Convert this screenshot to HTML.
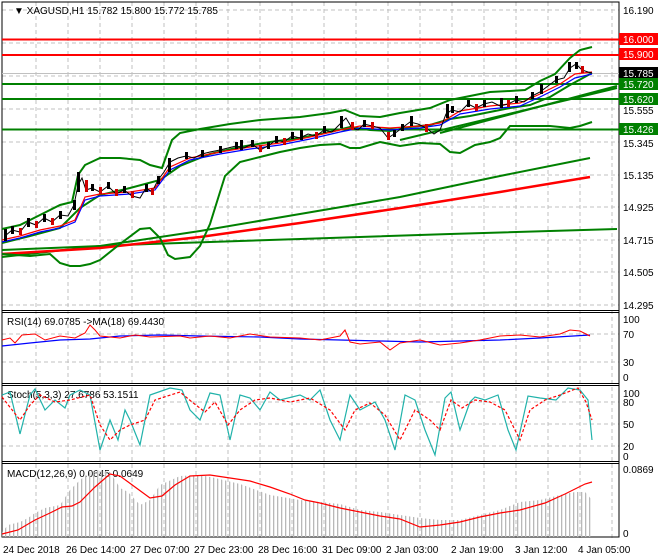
<!DOCTYPE html>
<html><head><meta charset="utf-8"><style>
html,body{margin:0;padding:0;background:#fff;width:660px;height:560px;overflow:hidden}
svg{display:block;font-family:"Liberation Sans",sans-serif}
text{font-size:10px;fill:#000}
</style></head><body>
<svg width="660" height="560" viewBox="0 0 660 560" xmlns="http://www.w3.org/2000/svg">
<defs>
<pattern id="bars" width="4" height="10" patternUnits="userSpaceOnUse"><rect x="1" y="0" width="1.3" height="10" fill="#b8b8b8"/></pattern>
</defs>
<g stroke="#c0c0c0" stroke-dasharray="4,3" stroke-width="1" fill="none">
<path d="M36 2V539M68 2V539M100 2V539M132 2V539M164 2V539M196 2V539M228 2V539M260 2V539M292 2V539M324 2V539M356 2V539M388 2V539M420 2V539M452 2V539M484 2V539M516 2V539M548 2V539M580 2V539M612 2V539"/>
<path d="M2 10H619M2 43H619M2 76H619M2 109H619M2 142H619M2 175H619M2 207H619M2 240H619M2 272H619M2 305H619"/>
<path d="M2 334H619M2 362H619M2 402H619M2 424H619M2 446H619"/>
</g>
<rect x="2" y="2" width="617" height="535" fill="none" stroke="#000"/>
<path d="M2 310.5H619M2 312.5H619M2 383.5H619M2 385.5H619M2 461.5H619M2 463.5H619" stroke="#000"/>
<path d="M2 39.5H619M2 55H619" stroke="#f00" stroke-width="2"/>
<path d="M2 73.5H619" stroke="#c0c0c0"/>
<path d="M2 84H619M2 99H619M2 129.5H619" stroke="#008000" stroke-width="2"/>
<polyline fill="none" stroke="#008000" stroke-width="2" points="2,250 150,244 300,239 450,234 617,229"/>
<polyline fill="none" stroke="#008000" stroke-width="2" points="2,257 100,246 200,231 300,214 400,197 500,176 590,158"/>
<polyline fill="none" stroke="#f00" stroke-width="2.5" points="2,254 100,248 200,237 300,223 400,208 500,192 590,177"/>
<polyline fill="none" stroke="#008000" stroke-width="2" points="440,133 617,86"/>
<polyline fill="none" stroke="#008000" stroke-width="2" points="400,140 617,88"/>
<polyline fill="none" stroke="#008000" stroke-width="2" points="2,229 20,225 40,215 60,205 72,202 78,175 85,165 100,158 120,158 140,160 150,165 162,168 172,140 180,133 200,129 230,124 260,120 300,117 330,113 345,110 360,116 380,117 400,113 430,108 450,100 470,96 490,92 510,91 525,90 540,81 555,74 570,58 580,50 592,47"/>
<polyline fill="none" stroke="#008000" stroke-width="2" points="2,254 30,256 50,254 60,263 70,266 80,266 90,264 100,260 120,244 140,229 150,228 160,238 168,255 175,259 190,257 200,246 210,224 225,176 240,162 260,157 280,152 300,148 320,145 340,144 350,148 360,148 380,142 400,146 420,143 440,144 450,152 460,153 475,145 490,142 500,138 510,126 530,126 550,126 570,128 580,126 592,122"/>
<polyline fill="none" stroke="#008000" stroke-width="2" points="2,243 30,236 60,228 80,208 100,195 130,188 160,180 180,166 210,154 240,147 270,142 300,138 330,132 350,127 370,130 390,131 410,127 430,125 450,119 470,116 490,112 510,108 530,105 550,97 570,85 592,73"/>
<polyline fill="none" stroke="#00f" stroke-width="1.2" points="2,242 20,238 40,232 60,228 75,222 85,200 100,196 130,194 155,190 170,170 190,160 220,154 250,149 280,145 310,139 340,132 360,128 390,130 420,128 440,125 460,114 490,109 520,106 540,97 560,87 575,78 592,74"/>
<polyline fill="none" stroke="#f00" stroke-width="1.2" points="2,240 20,236 40,230 60,226 75,220 85,197 100,194 130,192 155,188 170,167 190,158 220,152 250,147 280,143 310,137 340,130 360,126 390,128 420,126 440,123 460,111 490,106 520,103 540,94 560,84 575,74 592,72"/>
<polyline fill="none" stroke="#000" stroke-width="1" points="5,236 12,230 20,232 28,222 36,225 44,218 52,222 60,215 68,216 74,205 78,185 82,178 86,190 92,188 100,192 108,186 116,194 124,190 132,196 140,198 146,188 152,192 158,180 164,172 170,162 178,158 186,156 194,158 202,154 210,152 220,150 228,148 236,146 244,148 252,144 260,150 268,146 276,140 284,142 292,136 300,138 308,134 316,136 324,130 332,132 340,124 346,118 352,128 358,130 364,124 372,126 380,128 388,138 394,134 402,128 410,122 418,124 426,128 434,134 440,130 446,114 452,110 460,112 468,104 476,108 484,104 492,102 500,106 508,104 516,100 524,102 532,96 540,92 548,86 556,80 564,78 570,68 576,64 582,70 588,72 592,73"/>
<g fill="#000">
<rect x="4" y="229" width="3" height="12"/><rect x="11" y="226" width="3" height="8"/><rect x="27" y="218" width="3" height="9"/><rect x="43" y="214" width="3" height="8"/><rect x="59" y="211" width="3" height="8"/><rect x="73" y="200" width="3" height="10"/><rect x="77" y="172" width="3" height="20"/><rect x="91" y="184" width="3" height="7"/><rect x="107" y="182" width="3" height="7"/><rect x="123" y="186" width="3" height="7"/><rect x="145" y="184" width="3" height="8"/><rect x="157" y="176" width="3" height="8"/><rect x="168" y="158" width="3" height="14"/><rect x="185" y="152" width="3" height="7"/><rect x="201" y="150" width="3" height="7"/><rect x="219" y="146" width="3" height="7"/><rect x="235" y="142" width="3" height="7"/><rect x="240" y="140" width="3" height="10"/><rect x="251" y="140" width="3" height="7"/><rect x="267" y="142" width="3" height="7"/><rect x="275" y="136" width="3" height="7"/><rect x="291" y="132" width="3" height="7"/><rect x="300" y="130" width="3" height="10"/><rect x="323" y="126" width="3" height="7"/><rect x="340" y="116" width="3" height="12"/><rect x="363" y="120" width="3" height="7"/><rect x="393" y="130" width="3" height="7"/><rect x="401" y="124" width="3" height="7"/><rect x="410" y="116" width="3" height="10"/><rect x="446" y="104" width="3" height="14"/><rect x="451" y="106" width="3" height="7"/><rect x="467" y="100" width="3" height="7"/><rect x="483" y="100" width="3" height="7"/><rect x="500" y="98" width="3" height="10"/><rect x="515" y="96" width="3" height="7"/><rect x="531" y="92" width="3" height="7"/><rect x="540" y="84" width="3" height="10"/><rect x="555" y="76" width="3" height="7"/><rect x="568" y="62" width="3" height="10"/><rect x="575" y="62" width="3" height="7"/>
</g>
<g fill="#d00000">
<rect x="19" y="228" width="3" height="7"/><rect x="35" y="221" width="3" height="7"/><rect x="51" y="218" width="3" height="7"/><rect x="85" y="180" width="3" height="12"/><rect x="99" y="187" width="3" height="7"/><rect x="115" y="189" width="3" height="7"/><rect x="131" y="191" width="3" height="7"/><rect x="151" y="188" width="3" height="7"/><rect x="259" y="145" width="3" height="7"/><rect x="283" y="138" width="3" height="7"/><rect x="315" y="132" width="3" height="7"/><rect x="351" y="122" width="3" height="8"/><rect x="371" y="122" width="3" height="7"/><rect x="387" y="132" width="3" height="8"/><rect x="425" y="124" width="3" height="8"/><rect x="475" y="104" width="3" height="7"/><rect x="507" y="100" width="3" height="7"/><rect x="581" y="66" width="3" height="7"/>
</g>
<text x="14" y="14" font-size="10">▼ XAGUSD,H1  15.782 15.800 15.772 15.785</text>
<g font-size="10">
<text x="623" y="14">16.190</text>
<rect x="619" y="33" width="39" height="12" fill="#f00"/><text x="623" y="43" style="fill:#fff">16.000</text>
<rect x="619" y="48" width="39" height="12" fill="#f00"/><text x="623" y="58" style="fill:#fff">15.900</text>
<rect x="619" y="67" width="39" height="12" fill="#000"/><text x="623" y="77" style="fill:#fff">15.785</text>
<rect x="619" y="78" width="39" height="12" fill="#008000"/><text x="623" y="88" style="fill:#fff">15.720</text>
<rect x="619" y="93" width="39" height="12" fill="#008000"/><text x="623" y="103" style="fill:#fff">15.620</text>
<text x="623" y="114">15.555</text>
<rect x="619" y="123" width="39" height="12" fill="#008000"/><text x="623" y="133" style="fill:#fff">15.426</text>
<text x="623" y="147">15.345</text>
<text x="623" y="179">15.135</text>
<text x="623" y="211">14.925</text>
<text x="623" y="244">14.715</text>
<text x="623" y="276">14.505</text>
<text x="623" y="309">14.295</text>
<text x="623" y="323">100</text><text x="623" y="338">70</text><text x="623" y="366">30</text><text x="623" y="381">0</text>
<text x="623" y="397">100</text><text x="623" y="406">80</text><text x="623" y="428">50</text><text x="623" y="450">20</text><text x="623" y="460">0</text>
<text x="623" y="473">0.0869</text><text x="623" y="537">0</text>
</g>
<text x="7" y="325">RSI(14) 69.0785  -&gt;MA(18) 69.4430</text>
<polyline fill="none" stroke="#00f" stroke-width="1.2" points="2,346 30,343 60,340 90,339 120,336 160,335 200,336 260,337 300,339 340,340 380,341 420,342 460,341 500,340 540,338 590,335"/>
<polyline fill="none" stroke="#f00" stroke-width="1" points="2,340 10,338 15,343 22,335 35,334 45,340 60,336 75,338 85,333 90,325 95,330 100,336 120,338 135,335 150,337 180,336 190,338 210,336 230,338 250,334 270,337 300,338 320,340 340,336 345,330 350,342 360,344 380,342 390,350 400,343 420,340 440,345 460,343 480,340 500,336 520,335 540,337 560,334 570,330 580,331 590,336"/>
<text x="7" y="398">Stoch(5,3,3) 27.6786 53.1511</text>
<polyline fill="none" stroke="#20b2aa" stroke-width="1.2" points="2,395 10,392 20,434 30,395 35,389 45,410 55,400 65,408 70,395 80,390 90,395 100,450 110,420 118,440 125,410 130,420 140,445 150,395 170,388 182,390 190,410 200,420 210,393 220,395 230,440 240,395 250,398 260,410 270,392 280,400 300,395 310,400 320,390 330,420 340,440 350,395 360,410 375,402 385,420 395,450 405,395 415,400 425,430 435,455 445,398 451,392 460,430 470,402 475,397 485,400 498,395 508,430 516,450 528,396 540,398 556,400 568,388 580,390 588,400 592,440"/>
<polyline fill="none" stroke="#f00" stroke-width="1.2" stroke-dasharray="3,2" points="2,397 20,420 30,405 40,395 55,402 70,400 90,395 100,425 110,440 120,430 130,425 145,420 155,400 180,392 192,402 205,412 215,402 228,425 240,410 255,400 270,398 290,402 310,398 330,410 345,430 355,410 370,403 385,415 400,440 415,410 430,420 440,430 451,400 462,408 475,400 490,402 505,410 520,440 530,410 545,400 560,395 578,388 586,402 592,420"/>
<text x="7" y="477">MACD(12,26,9) 0.0645 0.0649</text>
<polygon fill="url(#bars)" points="2,535 2,532 8,525 20,522 28,518 35,513 45,508 60,505 70,490 80,480 90,472 100,470 110,472 120,488 128,492 140,505 150,500 160,485 180,476 200,475 215,478 240,484 270,495 300,500 340,504 360,510 380,512 400,515 420,518 440,520 460,520 480,515 500,510 520,502 540,500 560,495 575,492 585,492 592,500 592,537 2,537"/>
<polyline fill="none" stroke="#f00" stroke-width="1.2" points="2,534 18,530 35,520 50,513 62,507 72,506 80,502 95,487 110,474 120,476 135,487 150,498 162,496 175,485 190,476 210,475 230,478 250,481 270,487 290,494 305,500 320,503 340,508 360,512 380,516 400,519 420,527 440,525 460,522 480,517 500,513 520,510 545,503 565,494 585,484 592,482"/>
<g font-size="10">
<text x="3" y="553">24 Dec 2018</text><text x="66" y="553">26 Dec 14:00</text><text x="130" y="553">27 Dec 07:00</text><text x="194" y="553">27 Dec 23:00</text><text x="258" y="553">28 Dec 16:00</text><text x="322" y="553">31 Dec 09:00</text><text x="386" y="553">2 Jan 03:00</text><text x="451" y="553">2 Jan 19:00</text><text x="515" y="553">3 Jan 12:00</text><text x="578" y="553">4 Jan 05:00</text>
</g>
</svg>
</body></html>
